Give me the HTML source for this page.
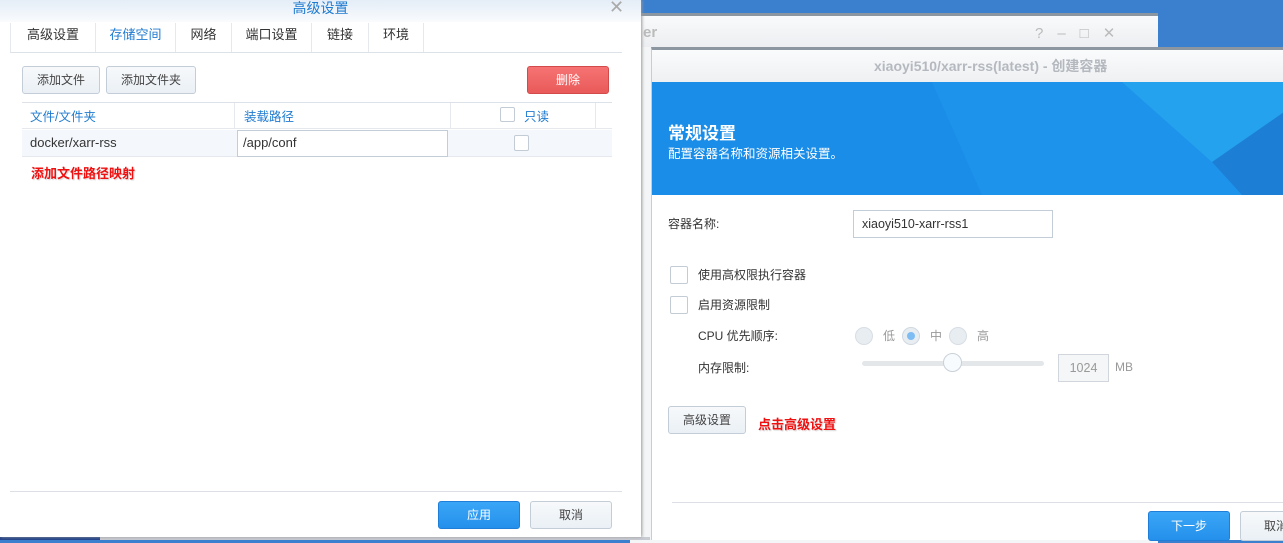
<!DOCTYPE html>
<html><head><meta charset="utf-8"><style>
*{box-sizing:border-box;margin:0;padding:0}
body{width:1283px;height:540px;overflow:hidden;position:relative;background:#3b7fcf;font-family:"Liberation Sans","Noto Sans CJK SC",sans-serif;font-size:12px;color:#333}
.abs{position:absolute}
.btn{position:absolute;border:1px solid #c3cdd8;border-radius:3px;background:linear-gradient(#f7f9fb,#eaf0f5);text-align:center;color:#444;font-size:12px}
.bbtn{position:absolute;border:1px solid #1f7fd8;border-radius:3px;background:linear-gradient(#3aa6f7,#2590eb);text-align:center;color:#fff;font-size:12px}
.cb{position:absolute;width:18px;height:18px;border:1px solid #c3cbd5;background:#fff;border-radius:2px}
.red{color:#f01010;font-weight:bold;font-size:13px;text-shadow:0 0 2px #fff,1px 1px 1px #ccc}
</style></head><body>
<div class="abs" style="left:630px;top:13px;width:528px;height:530px;background:#f3f5f7;border-top:3px solid #8c96a0"></div>
<div class="abs" style="left:630px;top:16px;width:528px;height:31px;background:linear-gradient(#f9fafb,#eceef1)"><span class="abs" style="left:13px;top:8px;font-size:15px;font-weight:bold;color:#bbb">er</span><span class="abs" style="left:405px;top:8px;font-size:15px;color:#bbb;letter-spacing:14px">?–□✕</span></div>
<div class="abs" style="left:0;top:537px;width:100px;height:3px;background:#23438a"></div>
<div class="abs" style="left:100px;top:537px;width:550px;height:3px;background:#c8ccd2"></div>

<div class="abs" style="left:0;top:0;width:641px;height:537px;background:#fff;box-shadow:1px 0 3px #999">
 <div class="abs" style="left:0;top:0;width:641px;height:22px;background:linear-gradient(#e4edf7,#f9fbfd)"></div>
 <div class="abs" style="left:0;top:-2px;width:641px;text-align:center;font-size:14px;color:#1f7bd0">高级设置</div>
 <div class="abs" style="left:609px;top:-3px;font-size:18px;color:#aaa">✕</div>
 <div class="abs" style="left:10px;top:52px;width:612px;height:1px;background:#dde2e8"></div>
 <div class="abs" style="left:10px;top:23px;height:29px;display:flex;font-size:13px">
  <div style="width:85px;border-left:1px solid #e5e8ec;text-align:center;line-height:24px">高级设置</div>
  <div style="width:80px;border-left:1px solid #e5e8ec;text-align:center;line-height:24px;color:#1f7bd0">存储空间</div>
  <div style="width:56px;border-left:1px solid #e5e8ec;text-align:center;line-height:24px">网络</div>
  <div style="width:80px;border-left:1px solid #e5e8ec;text-align:center;line-height:24px">端口设置</div>
  <div style="width:57px;border-left:1px solid #e5e8ec;text-align:center;line-height:24px">链接</div>
  <div style="width:56px;border-left:1px solid #e5e8ec;border-right:1px solid #e5e8ec;text-align:center;line-height:24px">环境</div>
 </div>
 <div class="btn" style="left:22px;top:66px;width:78px;height:28px;line-height:26px">添加文件</div>
 <div class="btn" style="left:106px;top:66px;width:90px;height:28px;line-height:26px">添加文件夹</div>
 <div class="abs" style="left:527px;top:66px;width:82px;height:28px;line-height:26px;border:1px solid #d24a4a;border-radius:3px;background:linear-gradient(#f67373,#e95a5a);color:#fff;text-align:center">删除</div>
 <div class="abs" style="left:22px;top:102px;width:590px;height:1px;background:#dde2e8"></div>
 <div class="abs" style="left:22px;top:103px;width:590px;height:26px;color:#1f7bd0;border-bottom:1px solid #e5e8ec;font-size:12.5px">
  <span class="abs" style="left:8px;top:3px">文件/文件夹</span>
  <div class="abs" style="left:212px;top:0;width:1px;height:26px;background:#e5e8ec"></div>
  <span class="abs" style="left:222px;top:3px">装载路径</span>
  <div class="abs" style="left:428px;top:0;width:1px;height:26px;background:#e5e8ec"></div>
  <div class="cb" style="left:478px;top:4px;width:15px;height:15px"></div><span class="abs" style="left:502px;top:3px">只读</span>
  <div class="abs" style="left:573px;top:0;width:1px;height:26px;background:#e5e8ec"></div>
 </div>
 <div class="abs" style="left:22px;top:130px;width:590px;height:27px;background:#f4f8fc;border-bottom:1px solid #e5e8ec">
  <span class="abs" style="left:8px;top:5px;font-size:13px">docker/xarr-rss</span>
  <div class="abs" style="left:215px;top:0;width:211px;height:27px;border:1px solid #c3cdd8;background:#fff;padding:4px 5px;font-size:13px">/app/conf</div>
  <div class="cb" style="left:492px;top:5px;width:15px;height:16px"></div>
 </div>
 <div class="abs red" style="left:31px;top:163px">添加文件路径映射</div>
 <div class="abs" style="left:10px;top:491px;width:612px;height:1px;background:#dcdfe3"></div>
 <div class="bbtn" style="left:438px;top:501px;width:82px;height:28px;line-height:26px">应用</div>
 <div class="btn" style="left:530px;top:501px;width:82px;height:28px;line-height:26px">取消</div>
</div>

<div class="abs" style="left:651px;top:47px;width:632px;height:493px;background:#fff;border-top:3px solid #8c96a0;border-left:1px solid #ccc">
 <div class="abs" style="left:0;top:0;width:632px;height:32px;background:linear-gradient(#fafbfc,#eef0f2);line-height:32px;font-size:14px;font-weight:bold;color:#b5b9bf"><span class="abs" style="left:222px;top:0">xiaoyi510/xarr-rss(latest) - 创建容器</span></div>
 <div class="abs" style="left:0;top:32px;width:632px;height:113px;background:#1a8de8;overflow:hidden">
  <svg width="632" height="113" style="position:absolute;left:0;top:0"><polygon points="280,0 632,0 632,113 330,113" fill="#2297ec" opacity=".6"/><polygon points="470,0 632,0 632,60 560,80" fill="#28a8ee" opacity=".7"/><polygon points="560,80 632,30 632,113 590,113" fill="#1c7fd5"/></svg>
  <div class="abs" style="left:16px;top:37px;color:#fff;font-size:17px;font-weight:bold">常规设置</div>
  <div class="abs" style="left:16px;top:61px;color:#fff;font-size:12.5px">配置容器名称和资源相关设置。</div>
 </div>
 <span class="abs" style="left:16px;top:165px">容器名称:</span>
 <div class="abs" style="left:201px;top:160px;width:200px;height:28px;border:1px solid #c3cdd8;padding:6px 8px;font-size:12.5px">xiaoyi510-xarr-rss1</div>
 <div class="cb" style="left:18px;top:216px"></div><span class="abs" style="left:46px;top:216px">使用高权限执行容器</span>
 <div class="cb" style="left:18px;top:246px"></div><span class="abs" style="left:46px;top:246px">启用资源限制</span>
 <span class="abs" style="left:46px;top:277px">CPU 优先顺序:</span>
 <div class="abs" style="left:203px;top:277px;width:18px;height:18px;border-radius:50%;background:#e8edf2;border:1px solid #d8dee5"></div><span class="abs" style="left:231px;top:277px;color:#999">低</span>
 <div class="abs" style="left:250px;top:277px;width:18px;height:18px;border-radius:50%;background:#e8edf2;border:1px solid #d0d8e0"><div style="width:8px;height:8px;border-radius:50%;background:#7dbdf3;margin:4px"></div></div><span class="abs" style="left:278px;top:277px;color:#999">中</span>
 <div class="abs" style="left:297px;top:277px;width:18px;height:18px;border-radius:50%;background:#e8edf2;border:1px solid #d8dee5"></div><span class="abs" style="left:325px;top:277px;color:#999">高</span>
 <span class="abs" style="left:46px;top:309px">内存限制:</span>
 <div class="abs" style="left:210px;top:311px;width:182px;height:5px;border-radius:3px;background:#e3e7ea"></div>
 <div class="abs" style="left:291px;top:303px;width:19px;height:19px;border-radius:50%;background:#f8fbfd;border:1px solid #c8d0d8"></div>
 <div class="abs" style="left:406px;top:304px;width:51px;height:28px;border:1px solid #d0d6dc;background:#f5f6f7;color:#999;text-align:center;line-height:26px;font-size:12.5px">1024</div>
 <span class="abs" style="left:463px;top:310px;color:#999">MB</span>
 <div class="btn" style="left:16px;top:356px;width:78px;height:28px;line-height:26px">高级设置</div>
 <div class="abs red" style="left:106px;top:364px">点击高级设置</div>
 <div class="abs" style="left:20px;top:452px;width:612px;height:1px;background:#dcdfe3"></div>
 <div class="bbtn" style="left:496px;top:461px;width:82px;height:30px;line-height:28px">下一步</div>
 <div class="btn" style="left:588px;top:461px;width:60px;height:30px;line-height:28px;text-align:left;padding-left:23px">取消</div>
</div>
</body></html>
